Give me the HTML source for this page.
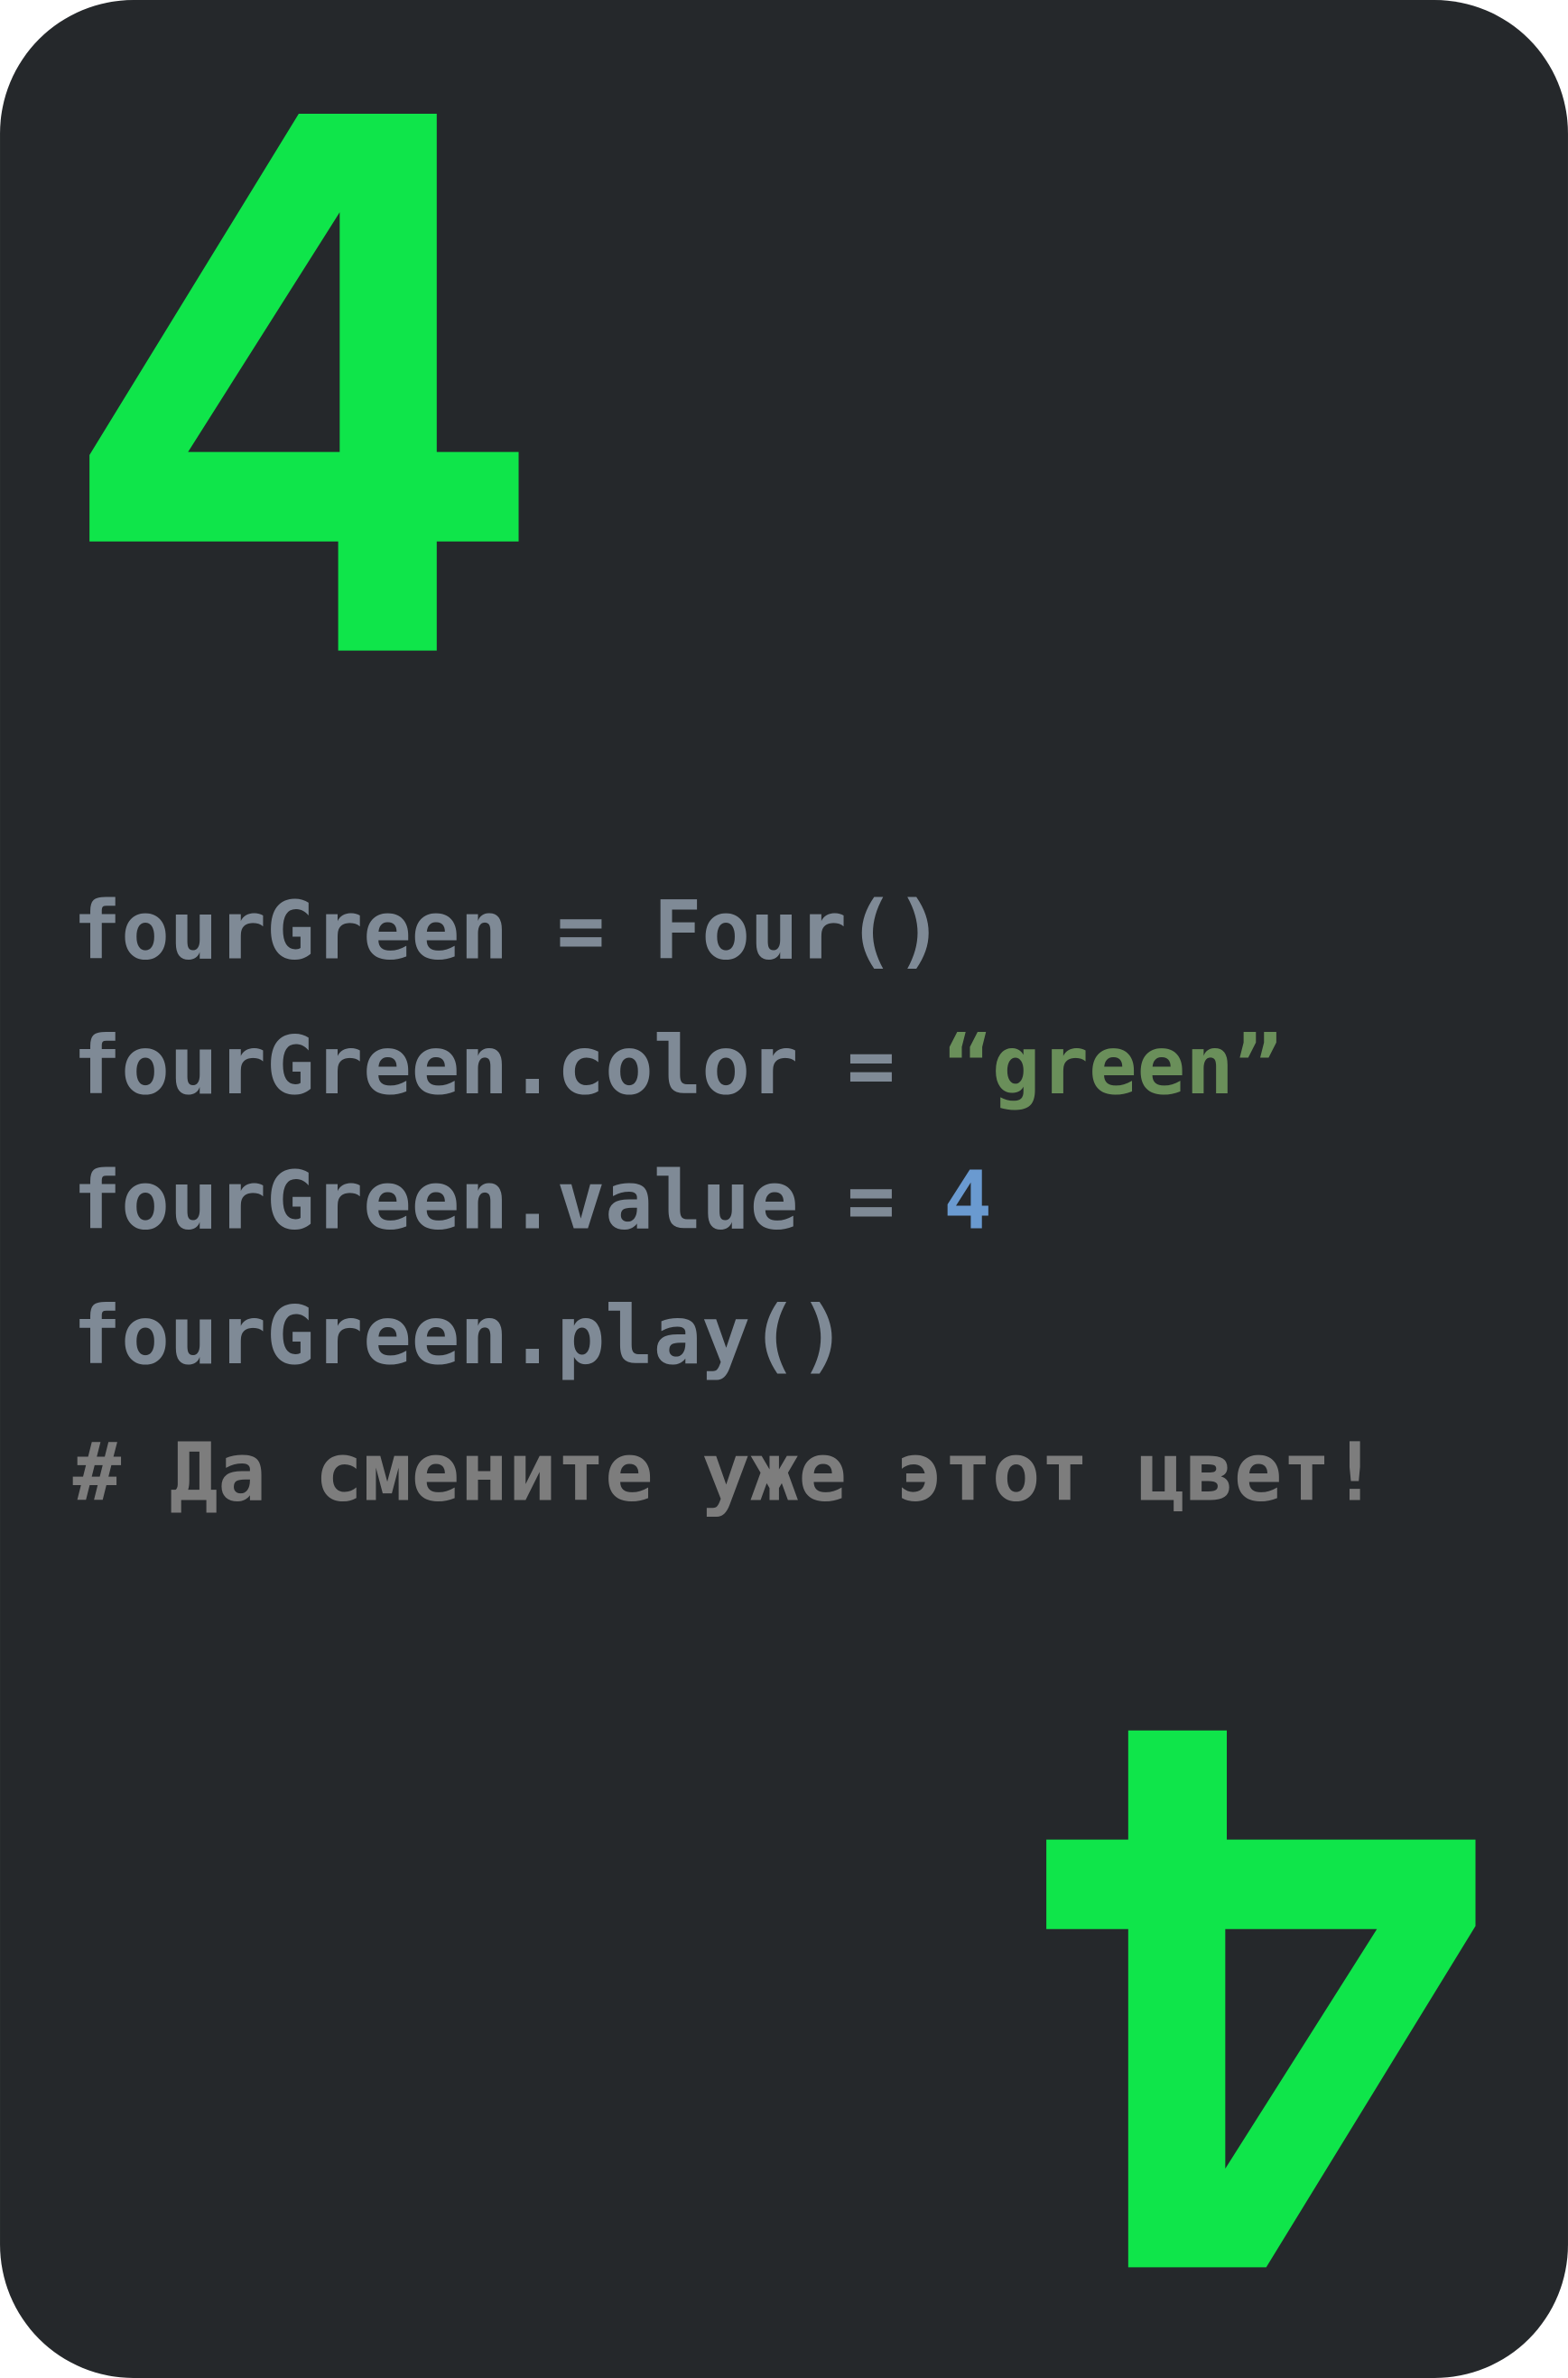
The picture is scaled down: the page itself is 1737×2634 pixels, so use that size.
<!DOCTYPE html>
<html><head><meta charset="utf-8"><style>
html,body{margin:0;padding:0;background:#fff;}
svg{display:block;}
text{font-family:"DejaVu Sans Mono","Liberation Mono",monospace;font-weight:bold;font-size:53px;white-space:pre;}
</style></head><body>
<svg width="1737" height="2634" viewBox="0 0 1034 1568" xmlns="http://www.w3.org/2000/svg">
<rect x="0" y="0" width="1034" height="1568" rx="88" ry="88" fill="#25282b"/>
<path fill="#0fe54a" fill-rule="evenodd" d="M59,300 L197,75 L288,75 L288,298 L342,298 L342,357 L288,357 L288,429 L223,429 L223,357 L59,357 Z M124,298 L224,140 L224,298 Z"/>
<path transform="rotate(180 516 785)" fill="#0fe54a" fill-rule="evenodd" d="M59,300 L197,75 L288,75 L288,298 L342,298 L342,357 L288,357 L288,429 L223,429 L223,357 L59,357 Z M124,298 L224,140 L224,298 Z"/>
<text x="48" y="632" fill="#7f8a96">fourGreen = Four()</text>
<text x="48" y="721" fill="#7f8a96">fourGreen.color = <tspan fill="#6a8f5a">“green”</tspan></text>
<text x="48" y="810" fill="#7f8a96">fourGreen.value = <tspan fill="#6a9ad0">4</tspan></text>
<text x="48" y="899" fill="#7f8a96">fourGreen.play()</text>
<text x="48" y="989" fill="#7d7d7d"># Да смените уже этот цвет!</text>
</svg>
</body></html>
